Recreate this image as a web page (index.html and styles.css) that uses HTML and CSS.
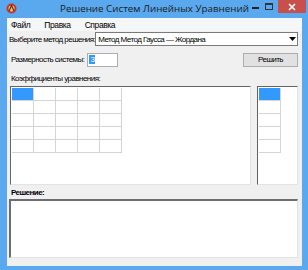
FILE: index.html
```html
<!DOCTYPE html>
<html>
<head>
<meta charset="utf-8">
<link rel="stylesheet" href="styles.css">
</head>
<body>
<div class="window">
  <div class="titlebar">
    <svg class="app-icon" width="11" height="11" viewBox="0 0 11 11">
      <circle cx="5.5" cy="5.5" r="5" fill="#c0392b"/>
      <circle cx="5.5" cy="5.5" r="3" fill="#f0c080"/>
      <path d="M3 8 L5.5 2.5 L8 8" stroke="#7a2a10" stroke-width="1.2" fill="none"/>
    </svg>
    <div class="title">Решение Систем Линейных Уравнений</div>
    <div class="controls">
      <div class="ctl min"><span></span></div>
      <div class="ctl max"><span></span></div>
      <div class="ctl close">
        <svg width="8" height="8" viewBox="0 0 8 8"><path d="M1 1 L7 7 M7 1 L1 7" stroke="#fff" stroke-width="1.6"/></svg>
      </div>
    </div>
  </div>
  <div class="client">
    <div class="menubar">
      <span class="menu-item">Файл</span>
      <span class="menu-item">Правка</span>
      <span class="menu-item">Справка</span>
    </div>
    <div class="row method-row">
      <span class="label">Выберите метод решения:</span>
      <div class="combo">
        <span class="combo-text">Метод Метод Гаусса — Жордана</span>
        <span class="combo-arrow"><svg width="7" height="4" viewBox="0 0 7 4"><path d="M0 0 H7 L3.5 4 Z" fill="#000"/></svg></span>
      </div>
    </div>
    <div class="row size-row">
      <span class="label size-label">Размерность системы:</span>
      <div class="num-input"><span class="sel">3</span></div>
      <div class="spacer"></div>
      <button class="btn">Решить</button>
    </div>
    <div class="label coef-label">Коэффициенты уравнения:</div>
    <div class="grids">
      <div class="grid-box matrix">
        <div class="cells matrix-cells" id="matrix"></div>
      </div>
      <div class="grid-box vector">
        <div class="cells vector-cells" id="vector"></div>
      </div>
    </div>
    <div class="label bold sol-label">Решение:</div>
    <div class="solution"></div>
  </div>
</div>
<script>
  function fill(id, rows, cols) {
    var el = document.getElementById(id);
    for (var r = 0; r < rows; r++) {
      for (var c = 0; c < cols; c++) {
        var d = document.createElement('div');
        d.className = 'cell' + (r === 0 && c === 0 ? ' active' : '');
        el.appendChild(d);
      }
    }
  }
  fill('matrix', 5, 5);
  fill('vector', 5, 1);
</script>
</body>
</html>
```
FILE: styles.css
```css
* { box-sizing: border-box; }
html, body { margin: 0; padding: 0; }
body { width: 308px; height: 270px; overflow: hidden; font-family: "Liberation Sans", Arial, sans-serif; }

.window {
  width: 308px; height: 270px;
  background: #5aa8ee;
  padding: 0 6px 6px 7px;
  display: flex; flex-direction: column;
}
.titlebar {
  height: 18px; flex: none;
  display: flex; align-items: center;
  position: relative;
}
.app-icon { margin-left: -1px; margin-top: -2px; }
.title {
  position: absolute; left: 0; right: 0; top: 2px;
  text-align: center;
  font-family: "Open Sans", "DejaVu Sans", sans-serif;
  font-size: 9.8px; color: #1a1a1a;
}
.controls {
  margin-left: auto; align-self: flex-start;
  display: flex; margin-right: -4px;
}
.ctl { width: 13px; height: 13px; display: flex; align-items: center; justify-content: center; }
.min span { width: 7px; height: 2px; background: #222; margin-top: 2px; }
.max span { width: 8px; height: 7px; border: 1px solid #333; border-top-width: 2px; }
.close { width: 28px; height: 13px; background: #c8504a; margin-left: 3px; }

.client {
  flex: 1;
  background: #f0f0f0;
  display: flex; flex-direction: column;
  font-size: 8px; letter-spacing: -0.55px; color: #000;
  padding: 0 4px 8px 1px;
}
.menubar {
  height: 13px; flex: none;
  display: flex; align-items: center; gap: 14px;
  background: #f5f6f7;
  margin: 0 -4px 0 -1px;
  padding-left: 4px;
  font-size: 8.5px; letter-spacing: -0.4px;
}
.row { display: flex; align-items: center; }
.method-row { margin-top: 1px; height: 14px; }
.label { white-space: nowrap; }
.method-row .label { margin-left: 1px; }
.combo {
  margin-left: auto; width: 203px; height: 14px;
  background: #fff; border: 1px solid #7a7a7a;
  display: flex; align-items: center; padding-left: 2px;
}
.combo-text { flex: 1; }
.combo-arrow { width: 10px; display: flex; justify-content: center; }

.size-row { margin-top: 6px; height: 15px; }
.size-label { margin-left: 3px; }
.num-input {
  width: 31px; height: 14px; margin-left: 3px;
  background: #fff; border: 1px solid #abadb3; padding-left: 1px;
  display: flex; align-items: center;
}
.sel { background: #3399ff; color: #fff; padding: 0 1px; }
.spacer { flex: 1; }
.btn {
  width: 55px; height: 14px; padding: 0;
  font-family: inherit; font-size: 8px; letter-spacing: -0.55px;
  background: #e1e1e1; border: 1px solid #adadad;
}

.coef-label { margin-top: 7px; margin-left: 3px; height: 11px; }
.grids { display: flex; margin-top: 1px; height: 99px; gap: 6px; }
.grid-box {
  background: #fff;
  border-top: 1px solid #646464; border-left: 1px solid #646464;
  border-right: 1px solid #e3e3e3; border-bottom: 1px solid #e3e3e3;
  padding: 1px 0 0 1px;
}
.matrix { margin-left: 2px; width: 242px; }
.vector { width: 41px; }
.cells { display: grid; grid-auto-rows: 13px; }
.matrix-cells { grid-template-columns: repeat(5, 22px); }
.vector-cells { grid-template-columns: 22px; }
.cell { border-right: 1px solid #d4d4d4; border-bottom: 1px solid #d4d4d4; }
.cell.active { background: #3399ff; }

.bold { font-weight: bold; }
.sol-label { margin-top: 3px; margin-left: 3px; height: 10px; }
.solution {
  margin-top: 1px; margin-left: 1px;
  height: 59px;
  background: #fff;
  border-top: 2px solid #6d6d6d; border-left: 2px solid #6d6d6d;
  border-right: 1px solid #e3e3e3; border-bottom: 1px solid #e3e3e3;
}
```
